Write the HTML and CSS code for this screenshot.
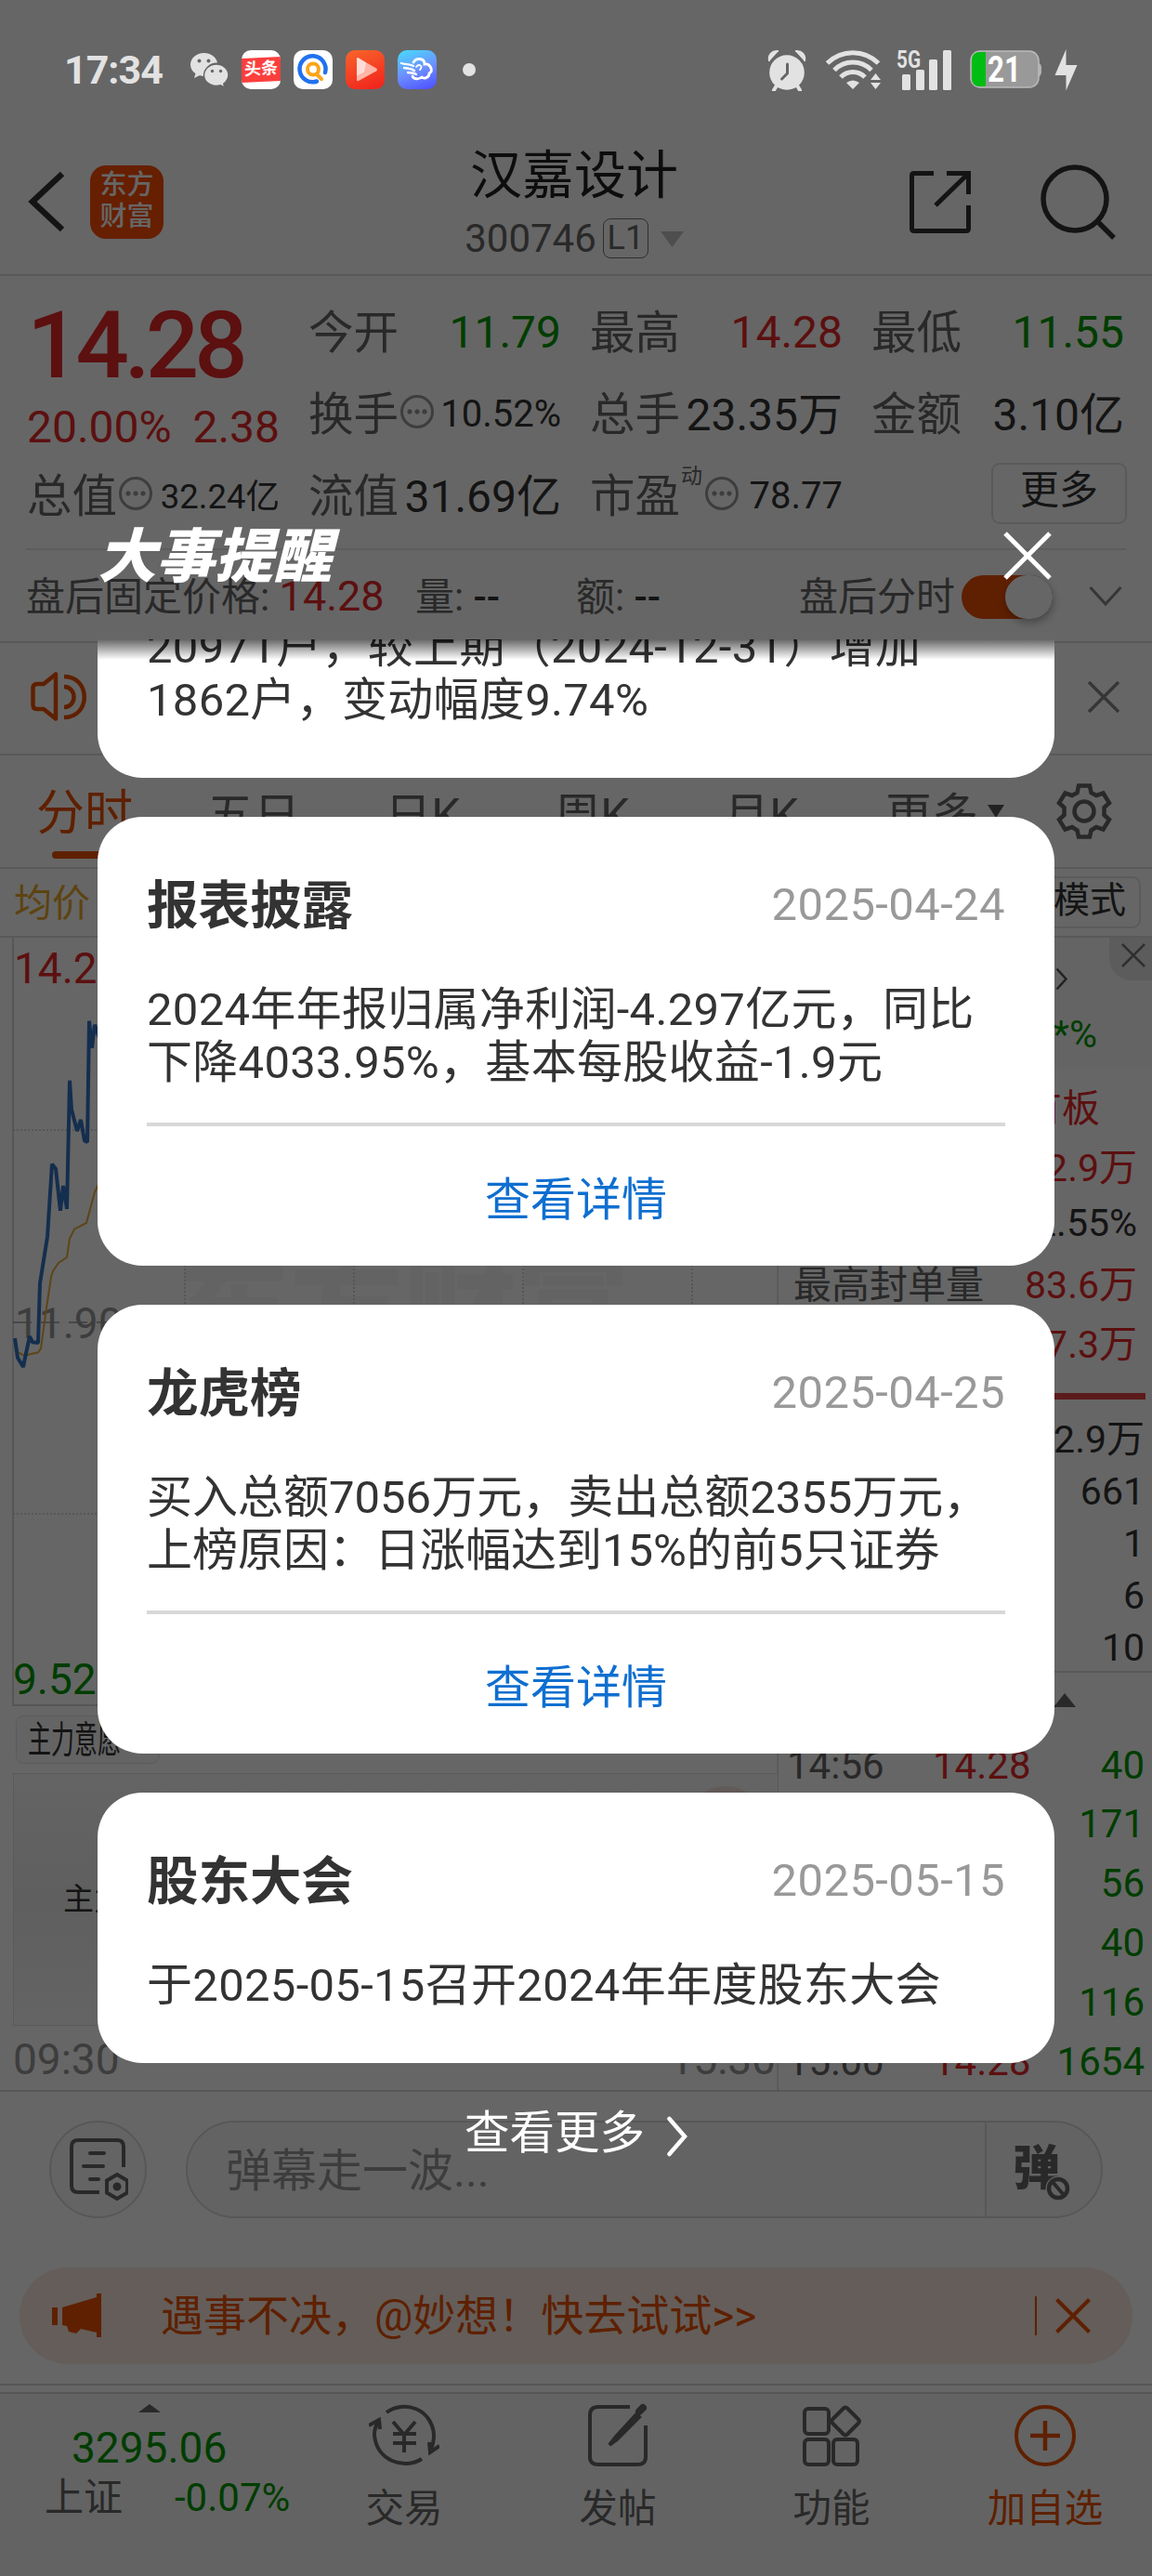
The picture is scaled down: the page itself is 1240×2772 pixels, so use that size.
FILE: index.html
```html
<!DOCTYPE html>
<html lang="zh-CN">
<head>
    <meta charset="UTF-8">
    <meta name="viewport" content="width=device-width, initial-scale=1.0">
    <title>汉嘉设计 300746</title>
    <link rel="stylesheet" href="styles.css">
</head>
<body>
    <div class="screen">
        <!-- status bar -->
        <div class="status">
            <span class="clock">17:34</span>
            <svg class="wechat" width="42" height="38" viewBox="0 0 42 38">
                <path fill="#e2e2e2" d="M14.500 1C6.500 1 0 6.600 0 13.500c0 4 2 7.300 5.500 9.700L4 28l5.500-2.800c2 .6 3.500.8 5.500.8A13 13 0 0 1 29 11.500C27.800 5.500 21.800 1 14.500 1z"/>
                <path fill="#e2e2e2" stroke="#666" stroke-width="1.500" d="M41 24.500C41 18.500 35 13 27.800 13S14.500 18.500 14.500 25s6 11.500 13.300 11.500c1.600 0 3-.3 4.500-.7l4.700 2.400-1.200-4c3-2.400 5.200-5.800 5.200-9.700z"/>
                <g fill="#666"><circle cx="9.500" cy="9.500" r="2"/><circle cx="19.500" cy="9.500" r="2"/><circle cx="23.500" cy="20.500" r="1.700"/><circle cx="32.500" cy="20.500" r="1.700"/></g>
            </svg>
            <span class="app news"><b>头条</b></span>
            <span class="app">
                <svg width="42" height="42" viewBox="0 0 42 42" fill="none" stroke-linecap="round">
                    <path d="M34 24a14 14 0 1 0-9 9.500" stroke="#2272ee" stroke-width="4.500"/>
                    <circle cx="21" cy="20.500" r="6" stroke="#faa61a" stroke-width="4"/>
                    <path d="M25 26l5 5" stroke="#faa61a" stroke-width="4"/>
                </svg>
            </span>
            <span class="app video">
                <svg width="42" height="42" viewBox="0 0 42 42">
                    <path d="M12 9.500q0-2 2-1l19 11q2 1.500 0 3l-19 10.500q-2 1-2-1z" fill="#ffb5a8"/>
                    <path d="M12 9.500q0-2 2-1l8 5-2 10-8 4z" fill="#ffddd6"/>
                </svg>
            </span>
            <span class="app cloud">
                <svg width="42" height="42" viewBox="0 0 42 42" fill="none" stroke="#fff" stroke-linecap="round">
                    <path d="M4 14c5 2 8 0 13 3M7 19c4 1 7 0 11 3M11 24c4 1 6 0 9 2" stroke-width="2.400"/>
                    <path d="M17 13c3-5 12-5 12 2 6-1 10 7 5 10 0 5-6 6-8 4-4 3-9 2-10-1" stroke-width="2.800"/>
                    <path d="M20 18c3-4 8-1 4 3" stroke-width="1.800"/>
                </svg>
            </span>
            <i class="dot"></i>
            <span class="grow"></span>
            <svg class="alarm" width="44" height="46" viewBox="0 0 44 46">
                <circle cx="22" cy="26" r="18.800" fill="#e2e2e2"/>
                <path d="M3 14C1 7 6 2 13 3M41 14c2-7-3-12-10-11" fill="#e2e2e2" stroke="#e2e2e2" stroke-width="1.500"/>
                <path d="M11 40l-3 5M33 40l3 5" stroke="#e2e2e2" stroke-width="4" stroke-linecap="round"/>
                <path d="M22.500 17v10l-6 6" fill="none" stroke="#666" stroke-width="3" stroke-linecap="round"/>
            </svg>
            <svg class="wifi" width="60" height="44" viewBox="0 0 60 44" fill="none" stroke="#e2e2e2" stroke-width="5">
                <path d="M1.500 15a39 39 0 0 1 55 0M9 22.500a28 28 0 0 1 40 0M16 30a18 18 0 0 1 26 0"/>
                <path d="M22 36q7-5 14 0l-7 7z" fill="#e2e2e2" stroke="none"/>
                <path d="M48 33l5.500-7 5.500 7zM48 36h11l-5.500 7z" fill="#e2e2e2" stroke="none"/>
            </svg>
            <svg class="signal" width="60" height="46" viewBox="0 0 60 46" fill="#e2e2e2">
                <rect x="6" y="28" width="9" height="17" rx="1.500"/><rect x="21" y="23" width="9" height="22" rx="1.500"/><rect x="35" y="12" width="9" height="33" rx="1.500"/><rect x="50" y="2" width="9" height="43" rx="1.500"/>
                <text x="0" y="21" font-size="25" font-weight="700" textLength="26" lengthAdjust="spacingAndGlyphs">5G</text>
            </svg>
            <svg class="battery" width="78" height="42" viewBox="0 0 78 42">
                <path d="M72 13q6 1 5 8q1 7-5 8z" fill="#b0b0b0"/>
                <rect x="1" y="1" width="73" height="39" rx="10" fill="#999" stroke="#bbb" stroke-width="1.500"/>
                <path d="M17 2v37h-6q-9 0-9-9V11q0-9 9-9z" fill="#00bd13"/>
                <text x="37" y="34" text-anchor="middle" font-size="38" font-weight="700" fill="#fff" textLength="36" lengthAdjust="spacingAndGlyphs">21</text>
            </svg>
            <svg width="25" height="45" viewBox="0 0 25 45"><path d="M12.500 0v17H24.500L12.500 44.500V28H.500z" fill="#e2e2e2"/></svg>
        </div>

        <!-- title bar -->
        <div class="header">
            <svg class="back" width="42" height="68" viewBox="0 0 42 68"><path d="M37 4L5 34l32 30" fill="none" stroke="#333" stroke-width="6.500"/></svg>
            <div class="logo">东方<br>财富</div>
            <div class="title">
                <div class="name">汉嘉设计</div>
                <div class="code">300746<span class="level">L1</span><svg width="25" height="18" viewBox="0 0 25 18"><path d="M0 1h25L12.500 18z" fill="#c4c4c4"/></svg></div>
            </div>
            <svg class="share" width="68" height="68" viewBox="0 0 68 68" fill="none" stroke="#333" stroke-width="5"><path d="M27 3.500H6Q3.500 3.500 3.500 6v57q0 2.500 2.500 2.500h56q2.500 0 2.500-2.500V38M41 3.500h23.500V26M64 4L29 38"/></svg>
            <svg width="82" height="82" viewBox="0 0 82 82" fill="none" stroke="#333" stroke-width="5.500"><circle cx="37" cy="38" r="34"/><path d="M61 62l18 18"/></svg>
        </div>

        <!-- quote -->
        <div class="quote">
            <div class="last">
                <div class="price red">14.28</div>
                <div class="change red"><span>20.00%</span><span>2.38</span></div>
            </div>
            <div class="cell"><span>今开</span><b class="green">11.79</b></div>
            <div class="cell"><span>最高</span><b class="red">14.28</b></div>
            <div class="cell"><span>最低</span><b class="green">11.55</b></div>
            <div class="cell"><span>换手</span><i class="tip"></i><b class="mid">10.52%</b></div>
            <div class="cell"><span>总手</span><b class="cjk">23.35万</b></div>
            <div class="cell"><span>金额</span><b class="cjk">3.10亿</b></div>
            <div class="cell"><span>总值</span><i class="tip"></i><b class="small cjk">32.24亿</b></div>
            <div class="cell"><span>流值</span><b class="cjk">31.69亿</b></div>
            <div class="cell"><span>市盈<sup>动</sup></span><i class="tip"></i><b class="mid">78.77</b></div>
            <div class="cell end"><button class="more">更多</button></div>
        </div>

        <div class="after">
            <span class="fixed">盘后固定价格: <b class="red">14.28</b></span>
            <span class="vol">量: <b>--</b></span>
            <span class="amt">额: <b>--</b></span>
            <span class="min">盘后分时</span>
            <i class="toggle"></i>
            <svg width="36" height="24" viewBox="0 0 36 24"><path d="M1.500 2L18 20 34.500 2" fill="none" stroke="#888" stroke-width="3"/></svg>
        </div>

        <div class="notice">
            <svg width="62" height="54" viewBox="0 0 62 54" fill="none" stroke="#eb5000" stroke-width="4.500" stroke-linejoin="round"><path d="M27 2.500v48L14 40H7q-4.500 0-4.500-4.500v-18Q2.500 13 7 13h7zM36 5c29 0 29 44 0 44M36 16c14 0 14 22 0 22"/></svg>
            <svg width="34" height="34" viewBox="0 0 34 34"><path d="M1 1l32 32M33 1L1 33" stroke="#888" stroke-width="3.500"/></svg>
        </div>

        <div class="tabs">
            <span class="active">分时</span>
            <span>五日</span>
            <span>日K</span>
            <span>周K</span>
            <span>月K</span>
            <span class="drop">更多<svg width="18" height="14" viewBox="0 0 18 14"><path d="M0 0h18L9 14z" fill="#555"/></svg></span>
            <svg class="gear" width="62" height="62" viewBox="0 0 62 62" fill="none" stroke="#666" stroke-width="4.500"><path d="M25 3.500h12l1.500 7.500 5.500 3 7.500-2.500L58 22l-5.500 5v8l5.500 5-6.500 10.500L44 48l-5.500 3.500L37 58.500H25l-1.500-7L18 48l-7.500 2.500L4 40l5.500-5v-8L4 22l6.500-10.500L18 14l5.500-3z"/><circle cx="31" cy="31" r="10.500"/></svg>
        </div>

        <div class="legend"><span>均价</span><button>模式</button></div>

        <div class="market">
            <svg class="chart" width="838" height="1241" viewBox="0 1008 838 1241">
                <defs>
                    <linearGradient id="fade" x1="0" y1="0" x2="0" y2="1"><stop offset="0" stop-color="#fafafa"/><stop offset=".5" stop-color="#ededed"/><stop offset="1" stop-color="#fafafa"/></linearGradient>
                </defs>
                <text class="watermark" x="190" y="1450">东方财富</text>
                <path class="grid" d="M14 1008v826h823M837.500 1008v1241"/>
                <path class="dots" d="M14 1215h823M14 1628h823M199 1008v826M381 1008v826M563 1008v826M745 1008v826"/>
                <path class="zero" d="M14 1422h823"/>
                <text class="axis gray" x="16" y="1439">11.90</text>
                <polyline class="avg" points="20,1454.300 26,1457.700 41,1454.300 44,1450 50,1406.700 55,1373 57,1367 63,1358 72,1352 75,1331.700 80,1321.700 93,1315 102,1281.700 110,1265"/>
                <polyline class="line" points="16,1439 19,1460 25,1470 27,1460 32,1437 35,1443.300 41,1444 43,1380 51,1330 56,1251.700 60,1256.700 65,1301.700 68,1275 72,1300 75,1161.700 77,1193 83,1216 87,1204 91,1226.700 94,1228 96,1097.700 99,1126.700 102,1101.700 110,1125"/>
                <text class="axis red" x="15" y="1057">14.28</text>
                <text class="axis green" x="14" y="1822">9.52</text>
                <rect x="17.500" y="1845.500" width="154" height="51" rx="8" fill="#fafafa" stroke="#e4e4e4"/>
                <text x="30" y="1885" font-size="40" fill="#333" textLength="100" lengthAdjust="spacingAndGlyphs">主力意愿</text>
                <rect x="14.500" y="1907.500" width="823" height="271" fill="url(#fade)" stroke="#e2e2e2"/>
                <ellipse cx="781" cy="1958" rx="40" ry="37" fill="#f5e2dc"/>
                <text x="68" y="2054" font-size="33" fill="#333">主力</text>
                <text class="axis gray" x="14" y="2231">09:30</text>
                <text class="axis gray" x="835" y="2231" text-anchor="end">15:30</text>
            </svg>
            <div class="side">
                <div class="lock">
                    <svg class="arrow" width="14" height="25" viewBox="0 0 14 25"><path d="M1.500 1.500L11.500 12.500 1.500 23.500" fill="none" stroke="#555" stroke-width="2.500"/></svg>
                    <span class="closetab"><svg width="26" height="26" viewBox="0 0 26 26"><path d="M1 1l24 24M25 1L1 25" stroke="#777" stroke-width="2.500"/></svg></span>
                    <div class="green pct">**%</div>
                </div>
                <div class="kv first"><b class="red">有板</b></div>
                <div class="kv"><b class="red">2.9万</b></div>
                <div class="kv"><b>2.55%</b></div>
                <div class="kv"><span>最高封单量</span><b class="red">83.6万</b></div>
                <div class="kv"><b class="red">7.3万</b></div>
                <div class="bar"></div>
                <div class="ask">2.9万</div>
                <div class="ask">661</div>
                <div class="ask">1</div>
                <div class="ask">6</div>
                <div class="ask">10</div>
                <div class="fold"><svg width="24" height="15" viewBox="0 0 24 15"><path d="M0 15L12 0l12 15z" fill="#666"/></svg></div>
                <div class="tick"><span>14:56</span><b class="red">14.28</b><b class="green">40</b></div>
                <div class="tick"><span>14:56</span><b class="red">14.28</b><b class="green">171</b></div>
                <div class="tick"><span>14:56</span><b class="red">14.28</b><b class="green">56</b></div>
                <div class="tick"><span>14:56</span><b class="red">14.28</b><b class="green">40</b></div>
                <div class="tick"><span>14:56</span><b class="red">14.28</b><b class="green">116</b></div>
                <div class="tick"><span>15:00</span><b class="red">14.28</b><b class="green">1654</b></div>
            </div>
        </div>

        <div class="comment">
            <span class="round">
                <svg width="64" height="68" viewBox="0 0 64 68" fill="none" stroke="#666" stroke-width="4"><path d="M33 58H10q-7 0-7-7V9q0-7 7-7h42q7 0 7 7v22"/><path d="M23 16h15M16 30h21M23 44h9" stroke-linecap="round"/><path d="M52 39l11 6.500v13L52 65l-11-6.500v-13z"/><circle cx="52" cy="52" r="2.500" fill="#666"/></svg>
            </span>
            <div class="field">
                <span>弹幕走一波...</span>
                <span class="danmu">弹<svg width="28" height="32" viewBox="0 0 28 32"><circle cx="14" cy="16" r="13.500" fill="#f8f8f8"/><circle cx="14" cy="16" r="10" fill="none" stroke="#666" stroke-width="4.500"/><path d="M8 9l12 14" stroke="#666" stroke-width="4"/></svg></span>
            </div>
        </div>

        <div class="promo">
            <svg width="54" height="48" viewBox="0 0 54 48" fill="#eb5000"><path d="M0 15h6v19H0zM11 15l37-11V0h5v47h-5v-5l-17-4-5 5-8-2-2-6-5-1z"/></svg>
            <span>遇事不决，@妙想！快去试试&gt;&gt;</span>
            <i></i>
            <svg width="38" height="38" viewBox="0 0 38 38"><path d="M1.500 1.500l35 35M36.500 1.500l-35 35" stroke="#eb5000" stroke-width="4"/></svg>
        </div>

        <div class="nav">
            <div class="index">
                <svg width="24" height="9" viewBox="0 0 24 9"><path d="M0 9L12 0l12 9z" fill="#666"/></svg>
                <div class="green point">3295.06</div>
                <div class="pair"><span>上证</span><b class="green">-0.07%</b></div>
            </div>
            <div class="item">
                <svg width="76" height="70" viewBox="0 0 76 70" fill="none" stroke="#666" stroke-width="4"><path d="M19 10C38-4 68 6 70 34q0 10-4 17M76 46l-10 7-1-11M57 60C38 72 8 62 6 34q0-8 4-13M0 24l11-6 1 10"/><path d="M26 20l12 14 12-14M26 33h25M26 43h25M38 33v20"/></svg>
                <span>交易</span>
            </div>
            <div class="item">
                <svg width="66" height="70" viewBox="0 0 66 70" fill="none" stroke="#666" stroke-width="4"><path d="M46 4H12q-9 0-9 9v45q0 8 9 8h42q9 0 9-8V24"/><path d="M56 9l4-4" stroke-width="8" stroke-linecap="round"/><path d="M53 12L31 36l-7 9 8-6 24-24z" stroke-width="4" fill="#666"/></svg>
                <span>发帖</span>
            </div>
            <div class="item">
                <svg width="66" height="70" viewBox="0 0 66 70" fill="none" stroke="#666" stroke-width="4"><rect x="4" y="6" width="26" height="27" rx="4"/><rect x="4" y="39" width="26" height="27" rx="4"/><rect x="35" y="39" width="26" height="27" rx="4"/><path d="M46 5.500q2-2 4 0l12 12q2 2 0 4l-12 12q-2 2-4 0l-12-12q-2-2 0-4z"/></svg>
                <span>功能</span>
            </div>
            <div class="item hot">
                <svg width="66" height="70" viewBox="0 0 66 70" fill="none" stroke="#eb5000" stroke-width="4"><circle cx="33" cy="35" r="31"/><path d="M17 35h32M33 19v32" stroke-width="4.500"/></svg>
                <span>加自选</span>
            </div>
        </div>

        <div class="mask"></div>

        <!-- event reminder dialog -->
        <div class="dialog">
            <div class="top">
                <h2>大事提醒</h2>
                <svg width="52" height="52" viewBox="0 0 52 52"><path d="M2 2l48 48M50 2L2 50" stroke="#fff" stroke-width="5"/></svg>
            </div>
            <div class="list">
                <div class="card">
                    <p>20971户，较上期（2024-12-31）增加<br>1862户，变动幅度9.74%</p>
                </div>
                <div class="card">
                    <div class="head"><h3>报表披露</h3><time>2025-04-24</time></div>
                    <p>2024年年报归属净利润-4.297亿元，同比<br>下降4033.95%，基本每股收益-1.9元</p>
                    <a class="detail">查看详情</a>
                </div>
                <div class="card">
                    <div class="head"><h3>龙虎榜</h3><time>2025-04-25</time></div>
                    <p class="tight">买入总额7056万元，卖出总额2355万元，<br>上榜原因：日涨幅达到15%的前5只证券</p>
                    <a class="detail">查看详情</a>
                </div>
                <div class="card">
                    <div class="head"><h3>股东大会</h3><time>2025-05-15</time></div>
                    <p>于2025-05-15召开2024年年度股东大会</p>
                </div>
            </div>
            <div class="all"><span>查看更多</span><svg width="22" height="46" viewBox="0 0 22 46"><path d="M2.500 4L19 23 2.500 42" fill="none" stroke="#fff" stroke-width="4.500" stroke-linecap="round"/></svg></div>
        </div>
    </div>
</body>
</html>
```
FILE: styles.css
```css
* {
    box-sizing: border-box;
}
body {
    margin: 0;
    font-family: Roboto, "Noto Sans CJK SC", sans-serif;
    color: #333;
    background: #fff;
}
svg {
    display: block;
    flex: none;
}
b, i {
    font-weight: 400;
    font-style: normal;
}
.red { color: #e62828; fill: #e62828; }
.green { color: #090; fill: #090; }
.gray { fill: #999; }

.screen {
    position: relative;
    width: 1240px;
    height: 2772px;
    overflow: hidden;
    white-space: nowrap;
}
.mask {
    position: absolute;
    inset: 0;
    background: rgba(0,0,0,0.6);
}

/* status bar */
.status {
    position: relative;
    z-index: 2;
    display: flex;
    align-items: center;
    height: 132px;
    padding: 18px 80px 0 69px;
}
.clock {
    width: 136px;
    font-size: 43px;
    font-weight: 700;
    letter-spacing: -1px;
    color: #e2e2e2;
}
.wechat { margin-right: 13px; }
.app {
    width: 42px;
    height: 42px;
    margin-right: 14px;
    border-radius: 10px;
    background: #fff;
    overflow: hidden;
    flex: none;
}
.news { padding-top: 8px; }
.news b {
    display: block;
    height: 26px;
    line-height: 24px;
    font-size: 18px;
    font-weight: 700;
    text-align: center;
    color: #fff;
    background: #fb3f3d;
    transform: skewY(-3deg);
}
.video { background: linear-gradient(160deg, #f9652b, #f0201c); }
.cloud { background: linear-gradient(160deg, #45ddff, #6d92ff 50%, #4c4cff); }
.dot {
    width: 14px;
    height: 14px;
    margin-left: 14px;
    border-radius: 50%;
    background: #e2e2e2;
}
.grow { flex: 1; }
.alarm { margin-right: 20px; }
.wifi { margin-right: 16px; }
.signal { margin-right: 19px; }
.battery { margin-right: 13px; }

/* title bar */
.header {
    display: flex;
    align-items: center;
    height: 165px;
    padding: 7px 38px 0 30px;
    border-bottom: 2px solid #dcdcdc;
    margin-bottom: 1px;
}
.back { margin: 0 25px 0 0; }
.logo {
    width: 79px;
    height: 79px;
    padding-top: 4px;
    border-radius: 17px;
    background: #ff4e00;
    color: #fff;
    font-size: 29px;
    font-weight: 500;
    line-height: 34px;
    text-align: center;
}
.title {
    flex: 1;
    padding: 3px 0 0 82px;
    text-align: center;
}
.name {
    font-size: 56px;
    line-height: 76px;
    color: #222;
}
.code {
    display: flex;
    align-items: center;
    justify-content: center;
    height: 60px;
    font-size: 42px;
    color: #666;
}
.level {
    width: 49px;
    height: 43px;
    margin: 0 13px 0 7px;
    border: 1.5px solid #777;
    border-radius: 8px;
    font-size: 36px;
    line-height: 40px;
}
.share { margin: -1px 74px 0 0; }
.header > svg:last-child { margin-top: -1px; }

/* quote */
.quote {
    display: grid;
    grid-template-columns: repeat(4, 272px);
    grid-template-rows: repeat(3, 88px);
    column-gap: 31px;
    height: 292px;
    padding: 15px 0 0 29px;
}
.last {
    grid-row: span 2;
}
.price {
    height: 113px;
    font-size: 101px;
    font-weight: 500;
    line-height: 118px;
    letter-spacing: -5px;
}
.change {
    display: flex;
    justify-content: space-between;
    font-size: 48px;
    line-height: 68px;
}
.cell {
    display: flex;
    align-items: center;
    font-size: 48.500px;
    color: #666;
}
.cell > span {
    position: relative;
    margin-top: -6px;
}
.cell b {
    margin-left: auto;
    font-size: 48px;
    color: #333;
}
.cell .cjk { margin-top: -6px; }
.cell .red { color: #e62828; }
.cell .green { color: #090; }
.cell .mid { font-size: 40px; }
.cell .small {
    margin-top: -4px;
    font-size: 36.500px;
}
.cell sup {
    position: absolute;
    left: 98px;
    top: -2px;
    font-size: 23px;
}
.tip {
    width: 36px;
    height: 36px;
    margin: -5px 0 0 2px;
    border: 3px solid #999;
    border-radius: 50%;
    background: radial-gradient(circle at 7px 15px, #999 2.200px, transparent 3px), radial-gradient(circle at 15px 15px, #999 2.200px, transparent 3px), radial-gradient(circle at 23px 15px, #999 2.200px, transparent 3px);
}
.cell:nth-last-child(2) .tip { margin-left: 27px; }
.end { justify-content: flex-end; }
.more {
    width: 146px;
    height: 66px;
    margin: -5px -3px 0 0;
    border: 2px solid #e2e2e2;
    border-radius: 9px;
    background: none;
    font: 42px Roboto, "Noto Sans CJK SC", sans-serif;
    line-height: 56px;
    color: #333;
    padding: 0 0 6px;
}
.after {
    display: flex;
    align-items: center;
    height: 100px;
    margin: 0 28px;
    padding-top: 2px;
    border-top: 2px solid #e8e8e8;
    font-size: 42px;
    color: #666;
}
.after span { margin-top: -8px; }
.after span b { color: #333; font-weight: 500; }
.after span .red { color: #e62828; font-size: 45px; font-weight: 400; }
.fixed { width: 419px; }
.vol { width: 173px; }
.amt { width: 240px; }
.min { width: 175px; }
.toggle {
    width: 98px;
    height: 47px;
    margin-right: 39px;
    border-radius: 24px;
    background: #eb5000;
}
.toggle::after {
    content: "";
    display: block;
    width: 51px;
    height: 47px;
    margin-left: 47px;
    border-radius: 24px;
    background: #fff;
    box-shadow: 1px 4px 8px rgba(0,0,0,0.3);
}
.notice {
    display: flex;
    align-items: center;
    justify-content: space-between;
    height: 123px;
    padding: 0 35px 4px 33px;
    border-top: 2px solid #dedede;
    border-bottom: 2px solid #dedede;
}
.tabs {
    display: flex;
    align-items: center;
    height: 122px;
    border-bottom: 2px solid #dedede;
    font-size: 50px;
    color: #666;
}
.tabs span { width: 182px; text-align: center; }
.tabs .active {
    align-self: stretch;
    padding-top: 20px;
    font-size: 52px;
    color: #eb5000;
}
.active::after {
    content: "";
    display: block;
    width: 70px;
    height: 8px;
    margin: 8px auto 0;
    border-radius: 4px;
    background: #eb5000;
}
.tabs .drop {
    display: flex;
    align-items: center;
    width: 183px;
    margin-left: 43px;
    gap: 10px;
}
.legend {
    display: flex;
    align-items: center;
    justify-content: space-between;
    height: 74px;
    padding: 0 12px 0 15px;
    border-bottom: 2px solid #dedede;
    font-size: 41px;
    color: #e9a92c;
}
.legend span { margin-top: -6px; }
.legend button {
    width: 200px;
    height: 56px;
    padding: 0 14px 5px 0;
    border: 2px solid #e4e4e4;
    border-radius: 9px;
    background: none;
    text-align: right;
    font: 39px Roboto, "Noto Sans CJK SC", sans-serif;
    line-height: 46px;
    color: #333;
}

/* intraday chart */
.market {
    display: flex;
    height: 1242px;
    border-bottom: 2px solid #dadada;
}
.axis { font-size: 46px; }
.watermark { font-size: 122px; font-weight: 900; fill: #f8f8f8; }
.grid { fill: none; stroke: #d6d6d6; stroke-width: 2; }
.dots { fill: none; stroke: #ccc; stroke-width: 1.500; stroke-dasharray: 2 2; }
.zero { stroke: #999; stroke-width: 1.500; stroke-dasharray: 20 10; }
.avg { fill: none; stroke: #e9ad3a; stroke-width: 2; }
.line { fill: none; stroke: #3474c4; stroke-width: 4; stroke-linejoin: bevel; }
.side {
    width: 402px;
    font-size: 41px;
}
.lock {
    display: flex;
    flex-wrap: wrap;
    justify-content: flex-end;
    align-items: flex-start;
    height: 140px;
    background: #fafafa;
}
.arrow { margin: 32px 44px 0 0; }
.closetab {
    width: 46px;
    height: 46px;
    padding: 6px 0 0 13px;
    border-bottom-left-radius: 24px;
    background: #e6e6e6;
}
.pct {
    width: 100%;
    padding: 10px 59px 0 0;
    text-align: right;
    line-height: 60px;
}
.kv {
    display: flex;
    align-items: center;
    justify-content: space-between;
    height: 63.400px;
    padding: 0 16px;
    color: #666;
}
.kv b { margin-left: auto; }
.kv b:not(.red) { color: #333; }
.kv.first {
    height: 72px;
    padding: 8px 56px 0 0;
}
.bar {
    height: 7px;
    margin: 24px 7px 15px 16px;
    background: #e64545;
}
.ask {
    height: 56px;
    padding-right: 8px;
    line-height: 56px;
    text-align: right;
}
.fold {
    height: 70px;
    margin-top: -3px;
    padding: 22px 0 0 296px;
    border-top: 2px solid #dedede;
}
.tick {
    display: flex;
    height: 63.800px;
    padding: 0 8px 0 9px;
    line-height: 64px;
    font-size: 42px;
    color: #666;
}
.tick span { width: 157px; }
.tick .green { margin-left: auto; }

/* comment box */
.comment {
    display: flex;
    gap: 42px;
    height: 189px;
    padding: 31px 53px 0;
}
.round {
    display: flex;
    align-items: center;
    justify-content: center;
    width: 105px;
    height: 105px;
    border: 2px solid #d8dade;
    border-radius: 50%;
    background: #fafafa;
}
.field {
    display: flex;
    justify-content: space-between;
    align-items: center;
    width: 987px;
    height: 105px;
    padding-left: 41px;
    border: 2px solid #d8dade;
    border-radius: 53px;
    background: #f8f8f8;
    font-size: 49px;
    color: #999;
}
.field > span:first-child { margin-top: -6px; }
.danmu {
    display: flex;
    align-items: center;
    width: 125px;
    height: 101px;
    padding: 0 0 11px 28px;
    border-left: 2px solid #d8dade;
    font-size: 51px;
    font-weight: 900;
    color: #666;
}
.danmu svg { margin: 52px 0 0 -16px; }
.promo {
    display: flex;
    align-items: center;
    height: 104px;
    margin: 0 21px 21px;
    padding: 0 45px 0 35px;
    border-radius: 52px;
    background: #fae9df;
    font-size: 46px;
    color: #eb5000;
}
.promo span {
    flex: 1;
    margin-top: -9px;
    padding-left: 63px;
}
.promo i {
    width: 2px;
    height: 42px;
    margin-right: 20px;
    background: #eb5000;
}

/* bottom nav */
.nav {
    display: flex;
    height: 210px;
    border-top: 2px solid #d8d8d8;
    background: linear-gradient(#fff 7px, #d8d8d8 7px, #d8d8d8 9px, #f8f8f8 9px);
}
.index {
    width: 320px;
}
.index svg { margin: 20px 0 0 149px; }
.point {
    padding-left: 77px;
    font-size: 46px;
    line-height: 54px;
    margin-top: 11px;
}
.pair {
    display: flex;
    gap: 56px;
    align-items: center;
    padding-left: 48px;
    font-size: 42px;
    color: #666;
}
.pair span { margin-top: -8px; }
.item {
    display: flex;
    flex-direction: column;
    align-items: center;
    width: 230px;
    padding-top: 19px;
    font-size: 41.500px;
    color: #666;
}
.item span { margin-top: 10px; }
.hot { color: #eb5000; }

/* dialog */
.dialog {
    position: absolute;
    left: 105px;
    top: 540px;
    width: 1030px;
}
.top {
    display: flex;
    align-items: center;
    justify-content: space-between;
    height: 116px;
    padding: 0 3px 0 0;
}
.top h2 {
    margin: -10px 0 0;
    font-size: 63px;
    font-weight: 900;
    font-style: italic;
    color: #fff;
}
.list {
    position: relative;
    display: flex;
    flex-direction: column;
    justify-content: flex-end;
    gap: 42px;
    height: 1532px;
    margin-top: 32px;
    overflow: hidden;
}
.list::before {
    content: "";
    position: absolute;
    left: 0;
    right: 0;
    top: 0;
    height: 22px;
    background: linear-gradient(rgba(0,0,0,0.6), rgba(0,0,0,0));
    z-index: 1;
}
.card {
    flex: none;
    padding: 54px 53px 0;
    border-radius: 48px;
    background: #fff;
}
.head {
    display: flex;
    justify-content: space-between;
    align-items: center;
    height: 80px;
    margin-bottom: 45px;
}
.head h3 {
    margin: -7px 0 0;
    font-size: 55.500px;
    font-weight: 700;
}
.head time {
    font-size: 49px;
    letter-spacing: 0.4px;
    color: #999;
}
.card p {
    margin: 0;
    padding-bottom: 55px;
    font-size: 49px;
    line-height: 57px;
    letter-spacing: 0.3px;
}
.card .tight { letter-spacing: 0; }
.card .detail {
    display: block;
    height: 154px;
    margin-top: -19px;
    border-top: 4px solid #d8d8d8;
    line-height: 159px;
    font-size: 49px;
    text-align: center;
    color: #0f6fd0;
}
.all {
    display: flex;
    align-items: center;
    justify-content: center;
    gap: 24px;
    padding-top: 42px;
    font-size: 48.500px;
    color: #fff;
}
.all span { margin-top: -6px; }
.all svg { margin-top: 10px; }
```
